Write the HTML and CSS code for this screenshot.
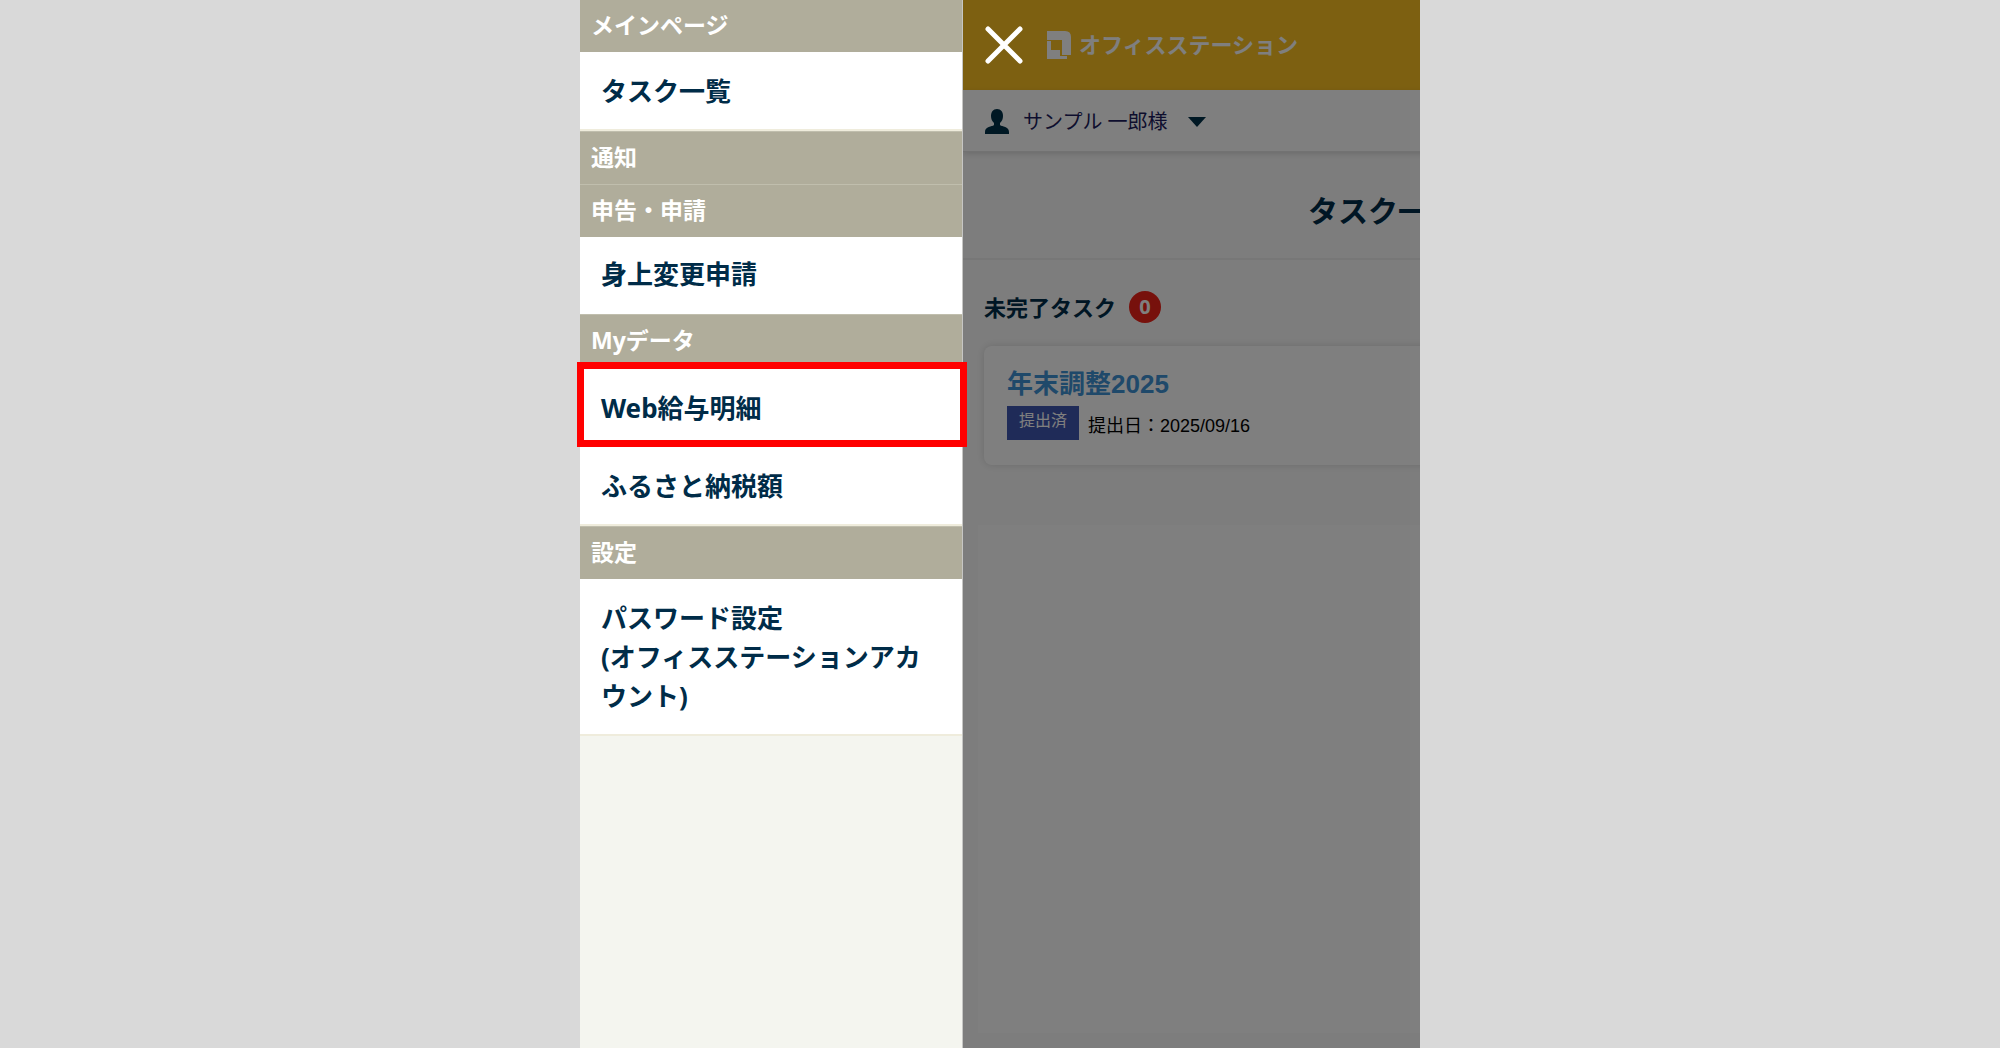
FILE: index.html
```html
<!DOCTYPE html>
<html lang="ja">
<head>
<meta charset="utf-8">
<title>オフィスステーション</title>
<link rel="stylesheet" href="styles.css">
</head>
<body>
<div class="viewport">
  <nav class="drawer" aria-label="メニュー">
    <h2 class="drawer-heading">メインページ</h2>
    <a class="drawer-link" href="#">タスク一覧</a>
    <h2 class="drawer-heading">通知</h2>
    <h2 class="drawer-heading">申告・申請</h2>
    <a class="drawer-link drawer-link-plain" href="#">身上変更申請</a>
    <h2 class="drawer-heading">Myデータ</h2>
    <a class="drawer-link drawer-link-marked" href="#">Web給与明細</a>
    <a class="drawer-link" href="#">ふるさと納税額</a>
    <h2 class="drawer-heading">設定</h2>
    <a class="drawer-link" href="#">パスワード設定<br>(オフィスステーションアカウント)</a>
  </nav>
  <div class="page-window">
    <div class="page">
      <header class="topbar">
        <button class="close" type="button" aria-label="閉じる">
          <svg width="40" height="40" viewBox="0 0 40 40"><path d="M4 4L36 36M36 4L4 36"/></svg>
        </button>
        <a class="brand" href="#">
          <svg width="25" height="28" viewBox="0 0 25 28"><path d="M0 0H18Q24 0 24 6V24H15V9H0Z"/><path d="M0 10H4V19H13V25H20V28H0Z"/></svg>
          <span class="brand-name">オフィスステーション</span>
        </a>
      </header>
      <button class="user" type="button">
        <svg class="user-icon" width="24" height="26" viewBox="0 0 24 26"><path d="M12 0C16 0 18 3 18 7C18 10 17 12 15 14V16C17 18 24 17 24 23V25H0V23C0 17 7 18 9 16V14C7 12 6 10 6 7C6 3 8 0 12 0Z"/></svg>
        <span>サンプル 一郎様</span>
        <svg class="user-arrow" width="18" height="10" viewBox="0 0 18 10"><path d="M0 0H18L9 10Z"/></svg>
      </button>
      <h1 class="title">タスク一覧</h1>
      <main class="tasks">
        <h2 class="tasks-heading">未完了タスク<span class="count">0</span></h2>
        <article class="card">
          <a class="card-title" href="#">年末調整2025</a>
          <p class="card-meta"><span class="status">提出済</span><span>提出日：2025/09/16</span></p>
        </article>
      </main>
      <div class="panel"></div>
      <div class="shade"></div>
    </div>
  </div>
</div>
</body>
</html>
```

FILE: styles.css
```css
* { box-sizing: border-box; }

body {
  margin: 0;
  background: #d9d9d9;
  font-family: "Noto Sans", "Noto Sans CJK JP", sans-serif;
  color: #002c48;
}

h1, h2, p { margin: 0; }
a { color: inherit; text-decoration: none; }
button { border: 0; padding: 0; font: inherit; color: inherit; background: none; cursor: pointer; }

.viewport {
  display: flex;
  width: 42%;
  min-height: 100vh;
  margin: 0 auto;
}

/* Drawer */
.drawer {
  flex: 0 0 383px;
  position: relative;
  z-index: 1;
  background: #f4f5ef;
  border-right: 1px solid #c6c6c4;
}

.drawer-heading {
  padding: 7px 11px 9px;
  border-top: 1px solid #c0bead;
  background: #b0ad9b;
  color: #fff;
  font-size: 23px;
  line-height: 36px;
}
.drawer-heading:first-child { border-top: 0; }

.drawer-link {
  display: block;
  position: relative;
  padding: 20px 16px 18px 21px;
  border-bottom: 2px solid #efecdc;
  background: #fff;
  font-size: 26px;
  font-weight: 700;
  line-height: 39px;
}
.drawer-link-plain {
  padding-top: 18px;
  padding-bottom: 20px;
  border-bottom: 0;
}
.drawer-link-marked {
  padding-top: 22px;
  padding-bottom: 17px;
  border-bottom-color: #fff;
}

.drawer-link-marked::after {
  content: "";
  position: absolute;
  inset: -5px -5px -2px -3px;
  border: 7px solid #f00;
}

/* Page behind the drawer, as wide as the whole viewport and cut by its edge */
.page-window {
  flex: 1;
  display: flex;
  overflow: hidden;
}

.page {
  flex: 0 0 calc(100% + 383px);
  display: flex;
  flex-direction: column;
  position: relative;
  background: #fbfbfb;
}

.shade {
  position: absolute;
  inset: 0;
  background: rgba(0, 0, 0, 0.5);
}

.topbar {
  display: flex;
  align-items: center;
  gap: 23px;
  height: 90px;
  padding-left: 21px;
  background: #fac123;
}

.close {
  position: relative;
  z-index: 2;
  height: 40px;
}
.close svg {
  display: block;
  stroke: #fff;
  stroke-width: 5;
  stroke-linecap: round;
}

.brand {
  display: flex;
  align-items: center;
  gap: 7px;
  color: #fff;
  fill: #fff;
  font-size: 22px;
  font-weight: 700;
}
.brand-name { padding-bottom: 4px; }

.user {
  display: flex;
  align-items: center;
  height: 62px;
  padding: 3px 22px 0;
  border-bottom: 1px solid #e4e4e4;
  background: #fff;
  box-shadow: 0 2px 6px rgba(0, 0, 0, 0.14);
  font-size: 20px;
  line-height: 32px;
  color: #1c1c5c;
  fill: #003048;
}
.user-icon { margin-right: 14px; }
.user-arrow { margin-left: 20px; }

.title {
  padding: 41px 0 29px;
  border-bottom: 2px solid #efefef;
  font-size: 30px;
  line-height: 36px;
  text-align: center;
}

.tasks { padding: 31px 21px 0; }

.tasks-heading {
  display: flex;
  align-items: center;
  gap: 13px;
  font-size: 22px;
  font-weight: 700;
  line-height: 32px;
}

.count {
  width: 32px;
  border-radius: 50%;
  background: #ee2218;
  color: #fff;
  font-size: 20px;
  text-align: center;
}

.card {
  margin-top: 23px;
  padding: 20px 23px 19px;
  border-radius: 8px;
  background: #fff;
  box-shadow: 0 0 8px rgba(0, 0, 0, 0.14);
  font-family: "Liberation Sans", "Noto Sans CJK JP", sans-serif;
}

.card-title {
  display: block;
  color: #3e92d4;
  font-size: 26px;
  font-weight: 700;
  line-height: 36px;
}

.card-meta {
  display: flex;
  gap: 9px;
  margin-top: 4px;
  color: #000;
  font-size: 18px;
  line-height: 40px;
}

.status {
  height: 34px;
  padding: 0 12px;
  background: #3e56b0;
  color: #fff;
  font-size: 16px;
  line-height: 30px;
}

.panel {
  flex: 1;
  margin: 60px 15px 15px;
  background: #fff;
}
```
